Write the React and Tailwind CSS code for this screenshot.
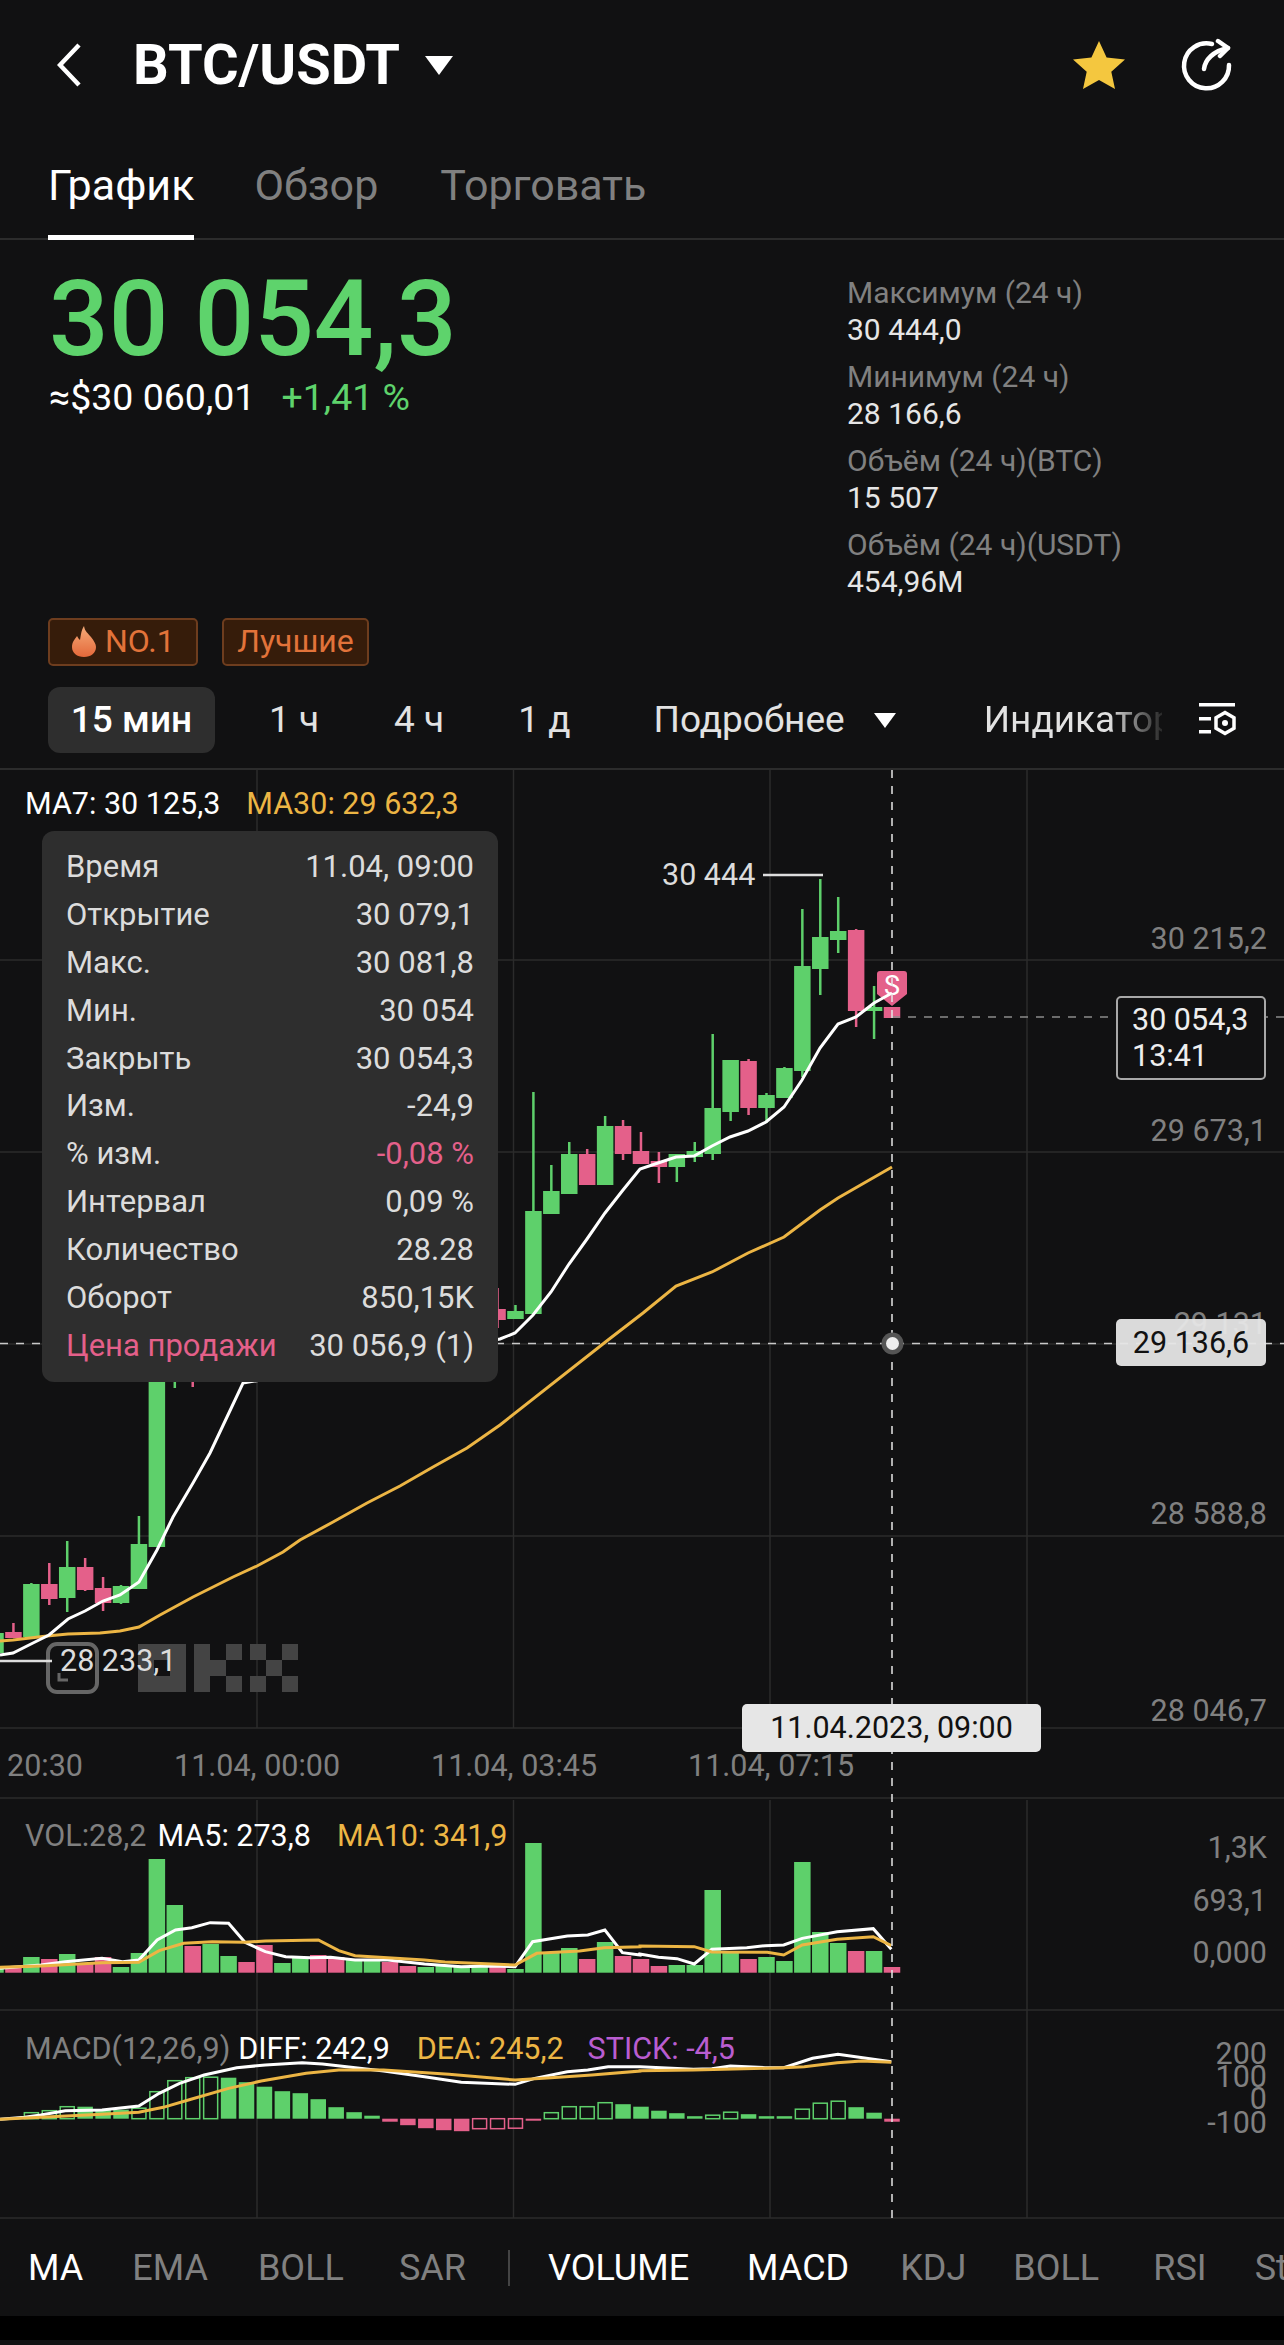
import React from 'react';

const GREEN = '#5ed06b';
const PINK = '#e4608a';
const YELLOW = '#ecb544';

const cx = (k) => 892 - 17.93 * k;
const z7 = ([x, y]) => [x / 2.45, 1780 + y / 3];
const z8 = ([x, y]) => [640 + x / 2.435, 1680 + y / 3];
const toPts = (arr) => arr.map((p) => p.join(',')).join(' ');

// k, body top, body bottom, wick top, wick bottom, colour ('g' or 'p')
const candles = [
    [0, 1007, 1018, 1007, 1018, 'p'], [1, 1007, 1011, 986, 1039, 'g'], [2, 930, 1011, 929, 1027, 'p'],
    [3, 931, 940, 897, 953, 'g'], [4, 937, 969, 879, 995, 'g'], [5, 966, 1071, 909, 1077, 'g'],
    [6, 1068, 1098, 1067, 1098, 'g'], [7, 1095, 1108, 1093, 1123, 'g'], [8, 1061, 1108, 1059, 1115, 'p'],
    [9, 1060, 1112, 1060, 1121, 'g'], [10, 1108, 1154, 1034, 1160, 'g'], [11, 1151, 1157, 1142, 1162, 'g'],
    [12, 1154, 1167, 1154, 1182, 'g'], [13, 1161, 1167, 1152, 1183, 'p'], [14, 1151, 1164, 1132, 1164, 'p'],
    [15, 1126, 1154, 1120, 1160, 'p'], [16, 1126, 1185, 1116, 1185, 'g'], [17, 1154, 1185, 1149, 1185, 'p'],
    [18, 1154, 1194, 1142, 1194, 'g'], [19, 1191, 1214, 1165, 1214, 'g'], [20, 1211, 1314, 1092, 1314, 'g'],
    [21, 1311, 1319, 1305, 1319, 'g'], [22, 1309, 1320, 1288, 1328, 'p'],
    [39, 1370, 1382, 1360, 1387, 'p'], [40, 1370, 1380, 1360, 1388, 'g'],
    [41, 1340, 1547, 1340, 1547, 'g'], [42, 1544, 1589, 1516, 1589, 'g'], [43, 1586, 1603, 1585, 1604, 'g'],
    [44, 1588, 1603, 1577, 1611, 'p'], [45, 1567, 1590, 1558, 1591, 'p'], [46, 1567, 1598, 1541, 1612, 'g'],
    [47, 1584, 1599, 1563, 1605, 'p'], [48, 1584, 1637, 1583, 1637, 'g'], [49, 1632, 1638, 1623, 1638, 'p'],
    [50, 1633, 1653, 1633, 1653, 'g'],
];

const ma7 = [
    [0, 1655], [13, 1653], [33, 1643], [49, 1635], [68, 1619], [85, 1611], [103, 1601], [120, 1595], [139, 1582],
    [157, 1550], [173, 1517], [193, 1483], [210, 1453], [227, 1417], [243, 1383], [500, 1339], [515, 1333],
    [533, 1315], [551, 1292], [569, 1264], [587, 1239], [605, 1213], [623, 1190], [640, 1169], [658, 1163],
    [676, 1157], [694, 1156], [712, 1146], [730, 1137], [748, 1131], [766, 1122], [784, 1107], [802, 1080],
    [820, 1048], [838, 1024], [856, 1017], [874, 1003], [892, 993],
];
const ma30 = [
    [0, 1641], [13, 1640], [47, 1636], [68, 1634], [100, 1633], [120, 1631], [139, 1627], [160, 1615], [193, 1597],
    [233, 1577], [257, 1566], [283, 1552], [300, 1540], [333, 1522], [367, 1503], [400, 1486], [433, 1467],
    [467, 1448], [500, 1425], [608, 1340], [643, 1313], [676, 1286], [712, 1272], [748, 1253], [784, 1237],
    [820, 1210], [838, 1198], [892, 1167],
];

// top of each volume bar, k = index in the array
const volTops = [
    [1967, 'p'], [1951, 'g'], [1951, 'p'], [1943, 'g'], [1932, 'g'], [1862, 'g'], [1961, 'g'], [1957, 'g'], [1959, 'p'],
    [1953, 'g'], [1890, 'g'], [1965, 'g'], [1965, 'g'], [1966, 'p'], [1959, 'p'], [1956, 'p'], [1942, 'g'], [1959, 'p'],
    [1948, 'g'], [1953, 'g'], [1843, 'g'], [1969, 'g'], [1966, 'p'], [1967, 'g'], [1967, 'g'], [1966, 'g'], [1967, 'g'],
    [1966, 'p'], [1962, 'p'], [1960, 'g'], [1960, 'g'], [1957, 'p'], [1955, 'p'], [1957, 'g'], [1963, 'g'], [1945, 'p'],
    [1962, 'p'], [1956, 'g'], [1944, 'g'], [1946, 'p'], [1905, 'g'], [1859, 'g'], [1953, 'g'], [1967, 'g'], [1957, 'p'],
    [1963, 'p'], [1954, 'g'], [1959, 'p'], [1957, 'g'], [1968, 'p'], [1967, 'g'],
];

const volWhite = [
    ...[[0, 565], [100, 555], [160, 545], [250, 535], [300, 545], [340, 540], [385, 480], [430, 450], [470, 443], [515, 428], [560, 430], [600, 487], [650, 515], [700, 530], [760, 533], [810, 532], [870, 540], [950, 540], [1040, 552], [1130, 560], [1200, 558], [1262, 560], [1305, 485], [1390, 468], [1440, 465], [1482, 450], [1525, 518], [1568, 525]].map(z7),
    ...[[0, 822], [45, 832], [90, 836], [132, 852], [175, 808], [260, 803], [305, 797], [350, 795], [395, 775], [480, 755], [568, 746], [612, 808]].map(z8),
];
const volYellow = [
    ...[[0, 562], [100, 558], [250, 548], [340, 547], [390, 512], [450, 490], [520, 485], [600, 487], [650, 483], [780, 480], [830, 512], [870, 527], [1040, 540], [1090, 546], [1262, 555], [1315, 520], [1420, 513], [1480, 503], [1568, 500]].map(z7),
    ...[[0, 798], [132, 800], [175, 816], [310, 817], [350, 825], [395, 795], [480, 778], [568, 770], [612, 797]].map(z8),
];

const MACD_ZERO = 2118.7;
// k, height above zero (negative goes below), hollow
const macdBars = [
    [0, -3, false], [1, 6, false], [2, 11.5, false], [3, 17.5, true], [4, 15.5, true], [5, 9.5, true], [6, 2.5, false], [7, 2.5, false],
    [8, 4.5, false], [9, 6.5, true], [10, 3.5, true], [11, 2.5, false], [12, 5.5, false], [13, 8, false], [14, 12, false],
    [15, 14.5, false], [16, 16, true], [17, 12, true], [18, 12, true], [19, 6, true], [20, -2, false], [21, -9.5, true],
    [22, -10, true], [23, -10, true], [24, -12.5, false], [25, -11.5, false], [26, -9.5, false], [27, -6.5, false],
    [28, -3, false], [29, 3, false], [30, 6.5, false], [31, 11.5, false], [32, 19.5, false], [33, 25.5, false], [34, 27.5, false],
    [35, 32, false], [36, 36.5, false], [37, 41, false], [38, 41.5, true], [39, 41, true], [40, 38, true], [41, 27, true],
    [42, 10.5, true], [43, 9, false], [44, 9, false], [45, 12, false], [46, 12, true], [47, 8, true], [48, 6, true],
];

const macdWhite = [
    ...[[0, 1018], [60, 1012], [100, 1005], [160, 992], [250, 990], [340, 978], [390, 940], [440, 910], [500, 885], [580, 863], [650, 855], [740, 848], [790, 852], [860, 862], [940, 873], [1040, 890], [1130, 907], [1262, 913], [1310, 895], [1390, 875], [1440, 870], [1490, 860], [1568, 860]].map(z7),
    ...[[0, 1160], [130, 1168], [175, 1166], [220, 1158], [305, 1163], [350, 1163], [420, 1135], [482, 1123], [612, 1145]].map(z8),
];
const macdYellow = [
    ...[[0, 1018], [100, 1012], [250, 1003], [340, 997], [400, 982], [470, 957], [560, 925], [640, 903], [750, 880], [830, 870], [940, 870], [1100, 883], [1262, 900], [1350, 893], [1450, 885], [1568, 873]].map(z7),
    ...[[0, 1172], [130, 1170], [305, 1165], [350, 1163], [400, 1160], [480, 1148], [540, 1143], [612, 1147]].map(z8),
];

const tooltipRows = [
    ['Время', '11.04, 09:00'],
    ['Открытие', '30 079,1'],
    ['Макс.', '30 081,8'],
    ['Мин.', '30 054'],
    ['Закрыть', '30 054,3'],
    ['Изм.', '-24,9'],
    ['% изм.', '-0,08 %', 'value'],
    ['Интервал', '0,09 %'],
    ['Количество', '28.28'],
    ['Оборот', '850,15K'],
    ['Цена продажи', '30 056,9 (1)', 'label'],
];

const stats = [
    ['Максимум (24 ч)', '30 444,0'],
    ['Минимум (24 ч)', '28 166,6'],
    ['Объём (24 ч)(BTC)', '15 507'],
    ['Объём (24 ч)(USDT)', '454,96M'],
];

const ChartDrawing = () => (
    <svg viewBox="0 770 1284 1449" className="absolute inset-0 w-full h-full">
        {/* grid */}
        {[960, 1152, 1344, 1536, 1728, 1798, 2010, 2218].map((y) => (
            <line key={y} x1="0" x2="1284" y1={y} y2={y} stroke="#2b2b2b" strokeWidth="1.5" />
        ))}
        {[257, 513.5, 770, 1027].map((x) => (
            <g key={x}>
                <line x1={x} x2={x} y1="770" y2="1728" stroke="#2b2b2b" strokeWidth="1.5" />
                <line x1={x} x2={x} y1="1800" y2="2218" stroke="#2b2b2b" strokeWidth="1.5" />
            </g>
        ))}

        {/* watermark */}
        <g fill="#444444">
            <path fillRule="evenodd" d="M138 1644h48v48h-48zM154 1660v16h16v-16z" />
            <path d="M194 1644h16v48h-16zM210 1660h16v16h-16zM226 1644h16v16h-16zM226 1676h16v16h-16z" />
            <path d="M250 1644h16v16h-16zM282 1644h16v16h-16zM266 1660h16v16h-16zM250 1676h16v16h-16zM282 1676h16v16h-16z" />
        </g>
        <rect x="48" y="1644" width="49" height="48" rx="9" fill="none" stroke="#666666" strokeWidth="4" />
        <path d="M59 1673v7h9" fill="none" stroke="#666666" strokeWidth="3" />

        {/* candles */}
        {candles.map(([k, top, bottom, wTop, wBottom, c]) => (
            <g key={k} fill={c === 'g' ? GREEN : PINK}>
                <rect x={cx(k) - 1.25} y={wTop} width="2.5" height={wBottom - wTop} />
                <rect x={cx(k) - 8.25} y={top} width="16.5" height={bottom - top} />
            </g>
        ))}

        <polyline points={toPts(ma30)} fill="none" stroke={YELLOW} strokeWidth="3" />
        <path d="M880 971h24a3 3 0 0 1 3 3v20l-15 12-15-12v-20a3 3 0 0 1 3-3z" fill={PINK} />
        <text x="892" y="995" textAnchor="middle" fontSize="27" fill="#ffffff" fontFamily="Roboto, sans-serif">S</text>
        <polyline points={toPts(ma7)} fill="none" stroke="#ffffff" strokeWidth="3" />

        {/* high and low marks */}
        <line x1="763" x2="823" y1="875" y2="875" stroke="#dddddd" strokeWidth="2.5" />
        <line x1="0" x2="52" y1="1661" y2="1661" stroke="#dddddd" strokeWidth="2.5" />

        {/* volume */}
        {volTops.map(([top, c], k) => (
            <rect key={k} x={cx(k) - 8.25} y={top} width="16.5" height={1972.7 - top} fill={c === 'g' ? GREEN : PINK} />
        ))}
        <polyline points={toPts(volWhite)} fill="none" stroke="#ffffff" strokeWidth="3" />
        <polyline points={toPts(volYellow)} fill="none" stroke={YELLOW} strokeWidth="3" />

        {/* macd */}
        {macdBars.map(([k, h, hollow]) => {
            const color = h > 0 ? GREEN : PINK;
            const y = h > 0 ? MACD_ZERO - h : MACD_ZERO;
            return hollow ? (
                <rect key={k} x={cx(k) - 7} y={y} width="14" height={Math.abs(h)} fill="none" stroke={color} strokeWidth="1.5" />
            ) : (
                <rect key={k} x={cx(k) - 7.75} y={y} width="15.5" height={Math.abs(h)} fill={color} />
            );
        })}
        <polyline points={toPts(macdWhite)} fill="none" stroke="#ffffff" strokeWidth="3" />
        <polyline points={toPts(macdYellow)} fill="none" stroke={YELLOW} strokeWidth="3" />

        {/* crosshair */}
        <line x1="892" x2="1284" y1="1017" y2="1017" stroke="#8a8a8a" strokeWidth="1.5" strokeDasharray="8 8" />
        <line x1="0" x2="1284" y1="1343.5" y2="1343.5" stroke="#c8c8c8" strokeWidth="1.5" strokeDasharray="8 8" />
        <line x1="892" x2="892" y1="770" y2="2218" stroke="#e6e6e6" strokeWidth="1.5" strokeDasharray="8 8" />
        <circle cx="892.5" cy="1343.5" r="11" fill="#555555" />
        <circle cx="892.5" cy="1343.5" r="6.5" fill="#eeeeee" />
    </svg>
);

const App = () => {
    return (
        <div className="w-[1284px] h-[2345px] bg-[#111112] overflow-hidden flex flex-col font-['Roboto',sans-serif] text-white">
            {/* Header */}
            <div className="h-[130px] shrink-0 flex items-center pl-[57px] pr-[50px]">
                <svg width="24" height="44" viewBox="0 0 24 44" fill="none" stroke="#ffffff" strokeWidth="4.5">
                    <path d="M22 2 3 22l19 20" />
                </svg>
                <span className="ml-[52px] text-[56px] font-bold leading-none">BTC/USDT</span>
                <svg width="28" height="20" viewBox="0 0 28 20" className="ml-[25px]" fill="#ffffff">
                    <path d="M0 1h28L14 20z" />
                </svg>
                <div className="ml-auto flex items-center gap-[55px]">
                    <svg width="52" height="48" viewBox="0 0 52 48" fill="#f4c73f">
                        <path d="M26 0l7.6 16.6 18.4 2-13.7 12.2L42 48 26 39l-16 9 3.700-17.200L0 18.600l18.400-2z" />
                    </svg>
                    <svg width="54" height="54" viewBox="0 0 54 54" fill="none" stroke="#ffffff" strokeWidth="4.5" strokeLinecap="round" strokeLinejoin="round">
                        <path d="M32 6A22.500 22.500 0 1 0 49 27" />
                        <path d="M24 31c1-9 9-18 24-21" />
                        <path d="M38 3l10 7-8 8" />
                    </svg>
                </div>
            </div>

            {/* Tabs */}
            <div className="h-[110px] shrink-0 flex px-[48px] border-b-2 border-[#2c2c2c] text-[43px] leading-none text-[#808080]">
                <div className="h-[110px] pt-[34px] border-b-[5px] border-white text-white">График</div>
                <div className="ml-[60px] pt-[34px]">Обзор</div>
                <div className="ml-[62px] pt-[34px]">Торговать</div>
            </div>

            {/* Price + stats */}
            <div className="h-[378px] shrink-0 flex">
                <div className="w-[847px] pl-[49px] pt-[27px]">
                    <div className="text-[105px] font-medium leading-none text-[#5ed36c]">30 054,3</div>
                    <div className="mt-[7px] flex gap-[26px] text-[37.5px] leading-none">
                        <span>≈$30 060,01</span>
                        <span className="text-[#5ed36c]">+1,41 %</span>
                    </div>
                </div>
                <div className="pt-[34px] flex flex-col gap-[10px] text-[30px] leading-[37px]">
                    {stats.map(([label, value]) => (
                        <div key={label}>
                            <div className="text-[#808080]">{label}</div>
                            <div className="text-[#e6e6e6]">{value}</div>
                        </div>
                    ))}
                </div>
            </div>

            {/* Badges */}
            <div className="h-[48px] shrink-0 flex gap-[24px] pl-[48px] text-[32px] leading-none text-[#e2733a]">
                <div className="w-[150px] pb-[2px] bg-[#361c0a] border-2 border-[#6e3d1e] rounded-[5px] flex items-center pl-[22px] gap-[9px]">
                    <svg width="24" height="31" viewBox="0 0 24 31">
                        <defs>
                            <linearGradient id="flame" x1="0" y1="0" x2="0" y2="1">
                                <stop offset="0" stopColor="#f5ab78" />
                                <stop offset="1" stopColor="#e4683a" />
                            </linearGradient>
                        </defs>
                        <path d="M12 0c1 6 4 7 7 11 3 4 5 7 5 10 0 6-5 10-12 10S0 27 0 21c0-5 3-8 5-11 1 2 2 3 3 4 1-5 1-9 4-14z" fill="url(#flame)" />
                    </svg>
                    <span>NO.1</span>
                </div>
                <div className="w-[147px] pb-[2px] bg-[#361c0a] border-2 border-[#6e3d1e] rounded-[5px] flex items-center justify-center">Лучшие</div>
            </div>

            {/* Timeframes */}
            <div className="h-[83px] mt-[21px] shrink-0 border-b-2 border-[#2c2c2c] pl-[48px] relative">
                <div className="h-[66px] flex items-center text-[37px] text-[#e2e2e2]">
                    <div className="w-[167px] h-[66px] bg-[#2e2e2e] rounded-[12px] flex items-center justify-center text-white font-medium">15 мин</div>
                    <span className="ml-[54px]">1 ч</span>
                    <span className="ml-[75px]">4 ч</span>
                    <span className="ml-[74px]">1 д</span>
                    <span className="ml-[83px]">Подробнее</span>
                    <svg width="22" height="15" viewBox="0 0 22 15" className="ml-[29px]" fill="#ffffff">
                        <path d="M0 0h22L11 15z" />
                    </svg>
                    <div className="ml-[88px] w-[178px] overflow-hidden whitespace-nowrap bg-linear-to-r from-[#e2e2e2] from-70% to-[#2a2a2a] bg-clip-text text-transparent">Индикатор</div>
                    <svg width="38" height="34" viewBox="0 0 38 34" className="ml-[37px]">
                        <path d="M0 0h36v3.500H0zM0 14h12v3.500H0zM0 27h12v3.500H0z" fill="#ffffff" />
                        <path d="M26 9.500l9 5.200v10.600l-9 5.200-9-5.200V14.700z" fill="none" stroke="#ffffff" strokeWidth="3.500" />
                        <circle cx="26" cy="20" r="3" fill="#ffffff" />
                    </svg>
                </div>
            </div>

            {/* Chart */}
            <div className="relative h-[1449px] shrink-0 text-[30.5px] leading-[36px] whitespace-nowrap">
                <ChartDrawing />

                <div className="absolute left-[25px] top-[16px] flex gap-[26px]">
                    <span>MA7: 30 125,3</span>
                    <span className="text-[#ecb544]">MA30: 29 632,3</span>
                </div>

                <span className="absolute left-[662px] top-[87px] text-[#dcdcdc]">30 444</span>
                <span className="absolute left-[60px] top-[873px] text-[#dcdcdc]">28 233,1</span>

                {/* price scale */}
                <div className="absolute right-[17px] top-[151px] text-[#808080]">30 215,2</div>
                <div className="absolute right-[17px] top-[343px] text-[#808080]">29 673,1</div>
                <div className="absolute right-[17px] top-[536px] text-[#808080]">29 131</div>
                <div className="absolute right-[17px] top-[726px] text-[#808080]">28 588,8</div>
                <div className="absolute right-[17px] top-[923px] text-[#808080]">28 046,7</div>

                <div className="absolute left-[1116px] top-[226px] w-[150px] h-[84px] bg-[#111112] border-2 border-[#a8a8a8] rounded-[5px] pl-[14px] pt-[4px] text-[#eeeeee]">
                    <div>30 054,3</div>
                    <div>13:41</div>
                </div>
                <div className="absolute left-[1116px] top-[549px] w-[150px] h-[47px] bg-[#e6e6e6]/95 rounded-[5px] flex items-center justify-center text-[#111111]">29 136,6</div>

                {/* time axis */}
                <span className="absolute left-[7px] top-[978px] text-[#808080]">20:30</span>
                <span className="absolute left-[174px] top-[978px] text-[#808080]">11.04, 00:00</span>
                <span className="absolute left-[431px] top-[978px] text-[#808080]">11.04, 03:45</span>
                <span className="absolute left-[688px] top-[978px] text-[#808080]">11.04, 07:15</span>
                <div className="absolute left-[742px] top-[934px] w-[299px] h-[48px] bg-[#e6e6e6] rounded-[5px] flex items-center justify-center text-[#111111]">11.04.2023, 09:00</div>

                {/* volume */}
                <div className="absolute left-[25px] top-[1048px] flex">
                    <span className="text-[#808080]">VOL:28,2</span>
                    <span className="ml-[11px]">MA5: 273,8</span>
                    <span className="ml-[26px] text-[#ecb544]">MA10: 341,9</span>
                </div>
                <div className="absolute right-[17px] top-[1060px] text-[#808080]">1,3K</div>
                <div className="absolute right-[17px] top-[1113px] text-[#808080]">693,1</div>
                <div className="absolute right-[17px] top-[1165px] text-[#808080]">0,000</div>

                {/* macd */}
                <div className="absolute left-[25px] top-[1261px] flex">
                    <span className="text-[#808080]">MACD(12,26,9)</span>
                    <span className="ml-[8px]">DIFF: 242,9</span>
                    <span className="ml-[27px] text-[#ecb544]">DEA: 245,2</span>
                    <span className="ml-[24px] text-[#b95dd0]">STICK: -4,5</span>
                </div>
                <div className="absolute right-[17px] top-[1266px] text-[#808080]">200</div>
                <div className="absolute right-[17px] top-[1289px] text-[#808080]">100</div>
                <div className="absolute right-[17px] top-[1311px] text-[#808080]">0</div>
                <div className="absolute right-[17px] top-[1335px] text-[#808080]">-100</div>

                {/* tooltip */}
                <div className="absolute left-[42px] top-[61px] w-[456px] h-[551px] bg-[#2e2e2e] rounded-[12px] px-[24px] py-[12px] flex flex-col text-[31px] text-[#dcdcdc]">
                    {tooltipRows.map(([label, value, red]) => (
                        <div key={label} className="h-[48px] flex items-center justify-between">
                            <span className={red === 'label' ? 'text-[#e4608a]' : ''}>{label}</span>
                            <span className={red === 'value' ? 'text-[#e4608a]' : ''}>{value}</span>
                        </div>
                    ))}
                </div>
            </div>

            {/* Bottom indicators */}
            <div className="h-[97px] shrink-0 flex items-center pl-[28px] text-[36px] text-[#808080] whitespace-nowrap overflow-hidden">
                <span className="text-white">MA</span>
                <span className="ml-[49px]">EMA</span>
                <span className="ml-[50px]">BOLL</span>
                <span className="ml-[55px]">SAR</span>
                <div className="ml-[42px] w-[2px] h-[36px] shrink-0 bg-[#444444]" />
                <span className="ml-[38px] text-white">VOLUME</span>
                <span className="ml-[58px] text-white">MACD</span>
                <span className="ml-[51px]">KDJ</span>
                <span className="ml-[47px]">BOLL</span>
                <span className="ml-[54px]">RSI</span>
                <span className="ml-[48px] shrink-0">StochRSI</span>
            </div>
            <div className="h-[24px] shrink-0 bg-black" />
        </div>
    );
};

export default App;
